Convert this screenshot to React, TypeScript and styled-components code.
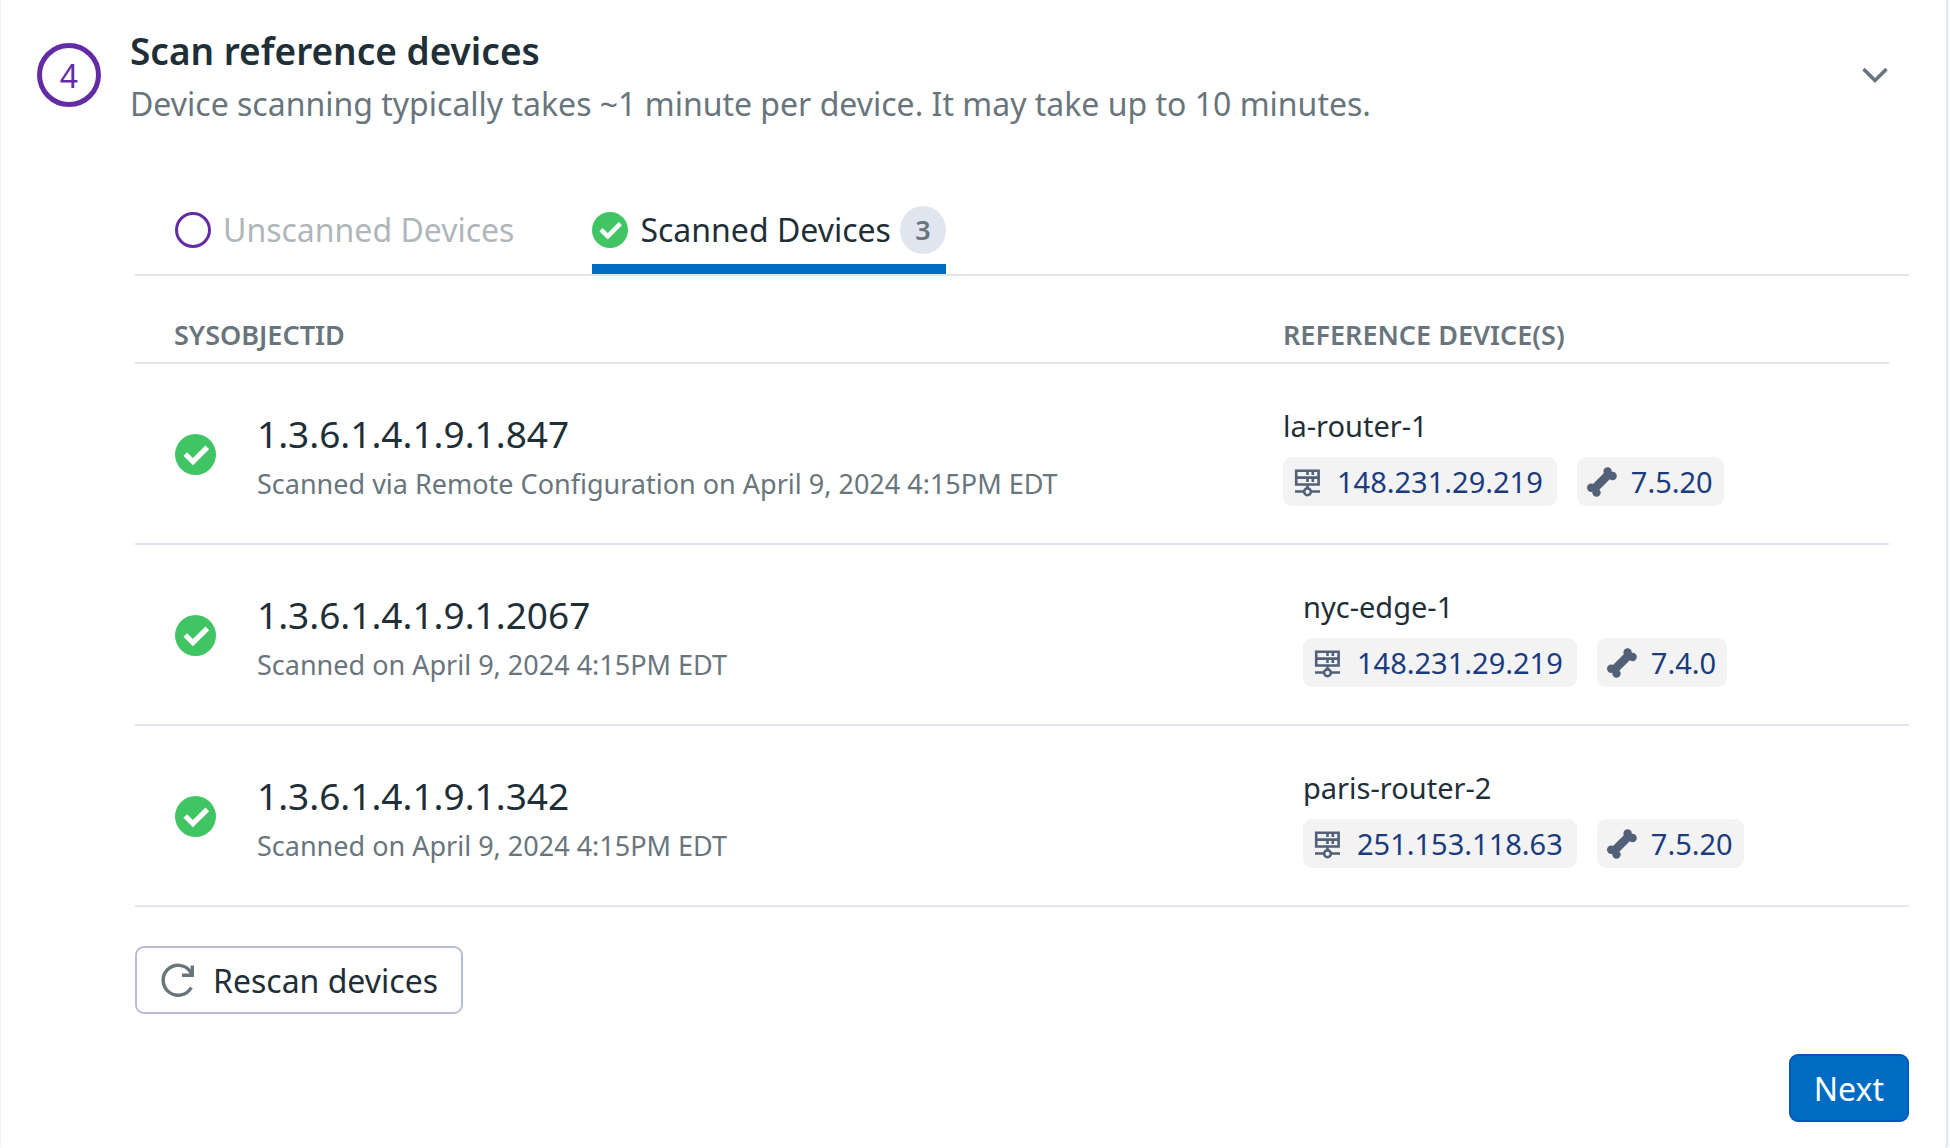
import React, { useState } from "react";
import styled, { createGlobalStyle } from "styled-components";

const color = {
  ink: "#1f2f38",
  muted: "#69757c",
  faint: "#b0b6ba",
  line: "#e1e5f0",
  purple: "#632ca6",
  blue: "#006bc2",
  green: "#41c464",
  chip: "#f3f3f4",
  chipText: "#1a3b7e",
  chipIcon: "#526078",
};

const GlobalStyle = createGlobalStyle`
  *, *::before, *::after { box-sizing: border-box; }
  body {
    margin: 0;
    background: #f9fafe;
    color: ${color.ink};
    font-family: "Noto Sans", "Open Sans", sans-serif;
  }
  h2, p { margin: 0; }
  button { font-family: inherit; cursor: pointer; }
`;

const Card = styled.section`
  margin-right: 2px;
  padding: 27px 37px 26px 36px;
  border-left: 1px solid #eff0f8;
  border-right: 2px solid ${color.line};
  border-radius: 0 0 4px 4px;
  background: #fff;
`;

const Header = styled.header`
  display: flex;
  align-items: flex-start;
  gap: 29px;
`;

const StepNumber = styled.span`
  flex: none;
  display: flex;
  align-items: center;
  justify-content: center;
  width: 64px;
  height: 64px;
  margin-top: 16px;
  border: 5px solid ${color.purple};
  border-radius: 50%;
  color: ${color.purple};
  font-size: 32px;
`;

const Heading = styled.div`
  flex: 1;
`;

const Title = styled.h2`
  font-size: 37px;
  line-height: 48px;
  font-weight: 600;
`;

const Subtitle = styled.p`
  color: ${color.muted};
  font-size: 32px;
  line-height: 58px;
`;

const Collapse = styled.button`
  display: flex;
  margin: 33px 21px 0 0;
  padding: 0;
  border: 0;
  background: none;
  color: ${color.muted};
`;

const Content = styled.div`
  padding-left: 98px;
`;

const Tabs = styled.div`
  display: flex;
  gap: 78px;
  margin-top: 59px;
  padding-left: 40px;
  border-bottom: 2px solid ${color.line};
`;

const Tab = styled.button<{ $active?: boolean }>`
  display: flex;
  align-items: center;
  gap: 12px;
  height: 82px;
  padding: 4px 0 0;
  border: 0;
  border-bottom: 10px solid ${(p) => (p.$active ? color.blue : "transparent")};
  background: none;
  color: ${(p) => (p.$active ? color.ink : color.faint)};
  font-size: 32px;
  line-height: 48px;
`;

const EmptyCircle = styled.span`
  width: 36px;
  height: 36px;
  border: 3px solid ${color.purple};
  border-radius: 50%;
`;

const Count = styled.span`
  display: flex;
  align-items: center;
  justify-content: center;
  width: 46px;
  height: 48px;
  margin-left: -3px;
  border-radius: 50%;
  background: ${color.line};
  color: ${color.muted};
  font-size: 27px;
  font-weight: 600;
`;

const Table = styled.table`
  display: block;
  text-align: left;

  thead, tbody { display: block; }
`;

const Row = styled.tr<{ $inset?: boolean }>`
  display: grid;
  grid-template-columns: minmax(0, 1fr) 606px;
  margin-right: ${(p) => (p.$inset ? 20 : 0)}px;
  border-bottom: 2px solid ${color.line};
`;

const HeadCell = styled.th`
  padding: 41px 0 9px;
  color: ${color.muted};
  font-size: 27px;
  line-height: 36px;
  font-weight: 600;

  &:first-child { padding-left: 39px; }
`;

const ObjectCell = styled.td`
  display: flex;
  align-items: center;
  gap: 41px;
  height: 179px;
  padding: 2px 0 0 40px;
`;

const ObjectText = styled.div`
  padding-top: 8px;
`;

const ObjectId = styled.div`
  font-size: 37px;
  line-height: 50px;
`;

const ScanNote = styled.div`
  color: ${color.muted};
  font-size: 27px;
  line-height: 50px;
`;

const DeviceCell = styled.td`
  display: flex;
  flex-direction: column;
  justify-content: center;
  gap: 11px;
  padding: 5px 0 0;
`;

const DeviceName = styled.div`
  font-size: 29px;
  line-height: 40px;
`;

const Chips = styled.div`
  display: flex;
  gap: 20px;
`;

const Chip = styled.span<{ $wide?: boolean }>`
  display: flex;
  align-items: center;
  gap: ${(p) => (p.$wide ? 16 : 14)}px;
  height: 49px;
  padding: 0 ${(p) => (p.$wide ? 14 : 11)}px 0 10px;
  border-radius: 9px;
  background: ${color.chip};
  color: ${color.chipText};
  font-size: 29px;

  svg { color: ${color.chipIcon}; }
`;

const Button = styled.button<{ $primary?: boolean }>`
  display: flex;
  align-items: center;
  gap: 19px;
  height: 68px;
  padding: 0 23px;
  border: 2px solid ${(p) => (p.$primary ? "#0058bd" : "#b9bdd3")};
  border-radius: 9px;
  background: ${(p) => (p.$primary ? color.blue : "#fff")};
  color: ${(p) => (p.$primary ? "#fff" : color.ink)};
  font-size: 32px;
`;

const RescanBar = styled.div`
  display: flex;
  margin-top: 39px;
`;

const Footer = styled.footer`
  display: flex;
  justify-content: flex-end;
  margin-top: 40px;
`;

const CheckIcon = ({ size }: { size: number }) => (
  <svg width={size} height={size} viewBox="0 0 40 40" aria-hidden="true">
    <circle cx="20" cy="20" r="20" fill={color.green} />
    <path d="M10 19.500l7.500 7.500L31.500 13" fill="none" stroke="#fff" strokeWidth="5" />
  </svg>
);

const ChevronIcon = () => (
  <svg width="26" height="30" viewBox="0 0 26 30" fill="none" aria-hidden="true">
    <path d="M1.500 9L13 20.500L24.500 9" stroke="currentColor" strokeWidth="3.600" />
  </svg>
);

const ServerIcon = () => (
  <svg width="28" height="30" viewBox="0 0 28 30" fill="none" stroke="currentColor" strokeWidth="2.600" aria-hidden="true">
    <path d="M3.200 3.700H25.600V17.500H3.200ZM3.200 10.600H25.600M14.500 17V21M2 24.500H11M18 24.500H27" />
    <path d="M14.500 5V8M19.800 5V8M14.500 12V15M19.800 12V15" />
    <circle cx="14.500" cy="24.800" r="3.400" />
  </svg>
);

const BoneIcon = () => (
  <svg width="30" height="30" viewBox="0 0 30 30" fill="currentColor" aria-hidden="true">
    <path d="M7 22L23 6" stroke="currentColor" strokeWidth="8.400" />
    <circle cx="4.200" cy="20.800" r="4.200" />
    <circle cx="9.500" cy="25.600" r="4.200" />
    <circle cx="20.600" cy="4.400" r="4.200" />
    <circle cx="25.600" cy="9" r="4.200" />
  </svg>
);

const RefreshIcon = () => (
  <svg width="34" height="34" viewBox="0 0 34 34" fill="none" stroke={color.muted} strokeWidth="3.400" aria-hidden="true">
    <path d="M31.300 24.500A15 15 0 1 1 30.300 8.500L32 11.500" />
    <path d="M32.300 2.500V12.300H22" />
  </svg>
);

const devices = [
  { id: "1.3.6.1.4.1.9.1.847", note: "Scanned via Remote Configuration on April 9, 2024 4:15PM EDT", name: "la-router-1", ip: "148.231.29.219", version: "7.5.20" },
  { id: "1.3.6.1.4.1.9.1.2067", note: "Scanned on April 9, 2024 4:15PM EDT", name: "nyc-edge-1", ip: "148.231.29.219", version: "7.4.0" },
  { id: "1.3.6.1.4.1.9.1.342", note: "Scanned on April 9, 2024 4:15PM EDT", name: "paris-router-2", ip: "251.153.118.63", version: "7.5.20" },
];

export default function App() {
  const [open, setOpen] = useState(true);

  return (
    <>
      <GlobalStyle />
      <Card>
        <Header>
          <StepNumber>4</StepNumber>
          <Heading>
            <Title>Scan reference devices</Title>
            <Subtitle>Device scanning typically takes ~1 minute per device. It may take up to 10 minutes.</Subtitle>
          </Heading>
          <Collapse type="button" aria-label="Toggle step" aria-expanded={open} onClick={() => setOpen(!open)}>
            <ChevronIcon />
          </Collapse>
        </Header>
        {open && (
          <Content>
            <Tabs role="tablist">
              <Tab type="button" role="tab" aria-selected={false}>
                <EmptyCircle />
                Unscanned Devices
              </Tab>
              <Tab type="button" role="tab" aria-selected $active>
                <CheckIcon size={36} />
                Scanned Devices
                <Count>3</Count>
              </Tab>
            </Tabs>
            <Table>
              <thead>
                <Row $inset>
                  <HeadCell scope="col">SYSOBJECTID</HeadCell>
                  <HeadCell scope="col">REFERENCE DEVICE(S)</HeadCell>
                </Row>
              </thead>
              <tbody>
                {devices.map((device, index) => (
                  <Row key={device.id} $inset={index === 0}>
                    <ObjectCell>
                      <CheckIcon size={41} />
                      <ObjectText>
                        <ObjectId>{device.id}</ObjectId>
                        <ScanNote>{device.note}</ScanNote>
                      </ObjectText>
                    </ObjectCell>
                    <DeviceCell>
                      <DeviceName>{device.name}</DeviceName>
                      <Chips>
                        <Chip $wide>
                          <ServerIcon />
                          {device.ip}
                        </Chip>
                        <Chip>
                          <BoneIcon />
                          {device.version}
                        </Chip>
                      </Chips>
                    </DeviceCell>
                  </Row>
                ))}
              </tbody>
            </Table>
            <RescanBar>
              <Button type="button">
                <RefreshIcon />
                Rescan devices
              </Button>
            </RescanBar>
            <Footer>
              <Button type="button" $primary>Next</Button>
            </Footer>
          </Content>
        )}
      </Card>
    </>
  );
}
